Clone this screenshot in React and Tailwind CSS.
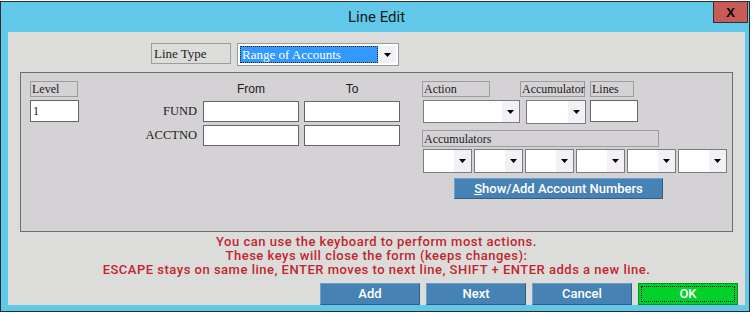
import React from "react";

const serif = { fontFamily: '"Liberation Serif", "Times New Roman", serif' };
const sans = { fontFamily: '"Liberation Sans", Arial, sans-serif' };

function Arrow() {
  return (
    <svg width="7" height="4" viewBox="0 0 7 4" className="block">
      <polygon points="0,0 7,0 3.5,4" fill="#000" />
    </svg>
  );
}

function Select({ w, h, arrowW = 17 }) {
  return (
    <div
      className="flex border border-[#7c7c7c] bg-white shrink-0"
      style={{ width: w, height: h }}
    >
      <div className="flex-1 bg-white" />
      <div
        className="flex items-center justify-center bg-[#f3f1f6]"
        style={{ width: arrowW }}
      >
        <Arrow />
      </div>
    </div>
  );
}

function Label({ children, className = "" }) {
  return (
    <div
      className={`flex items-center border border-[#9c9c9c] pl-[1px] text-[12px] leading-none text-[#1b1b1b] whitespace-nowrap overflow-visible shrink-0 ${className}`}
      style={serif}
    >
      {children}
    </div>
  );
}

function Input({ className = "", children }) {
  return (
    <div
      className={`flex items-center border border-[#666] bg-white pl-[2px] text-[12px] leading-none text-[#111] shrink-0 ${className}`}
      style={serif}
    >
      {children}
    </div>
  );
}

function BlueButton({ children, className = "" }) {
  return (
    <div
      className={`flex items-center justify-center bg-[#4682b4] border border-t-[#6f9fcb] border-l-[#6f9fcb] border-r-[#2d5e88] border-b-[#2d5e88] text-white text-[13px] shrink-0 ${className}`}
      style={{ fontFamily: 'Roboto, "Liberation Sans", sans-serif', fontWeight: 500 }}
    >
      {children}
    </div>
  );
}

export default function App() {
  return (
    <div className="w-[754px] h-[315px] bg-white overflow-hidden">
      <div className="mt-[1px] w-[750px] h-[311px] border border-[#2b2b2b] bg-[#62c8ea] flex flex-col">
        {/* title bar */}
        <div className="relative h-[30px] shrink-0 flex items-center justify-center">
          <span
            className="text-[15px] text-[#1a1a1a] pl-[3px] pt-[1px]"
            style={{ fontFamily: 'Roboto, "Noto Sans", sans-serif' }}
          >
            Line Edit
          </span>
          <div className="absolute right-[1px] top-[-1px] w-[35px] h-[22px] bg-[#c75b55] border border-[#3a2a2a] flex items-center justify-center">
            <span
              className="text-[13px] font-bold text-black leading-none"
              style={{ fontFamily: '"Liberation Sans", Arial, sans-serif' }}
            >
              X
            </span>
          </div>
        </div>

        {/* content */}
        <div className="ml-[7px] w-[737px] h-[273px] bg-[#dcdddb] flex flex-col">
          {/* line type row */}
          <div className="flex mt-[11px] ml-[143px] h-[23px]">
            <Label className="w-[80px] h-[21px] text-[13px] pl-[2px]">Line Type</Label>
            <div className="ml-[6px] w-[162px] h-[23px] border border-[#9a9a9a] bg-white flex p-[2px]">
              <div
                className="flex-1 bg-[#3399ff] border border-dotted border-[#222] text-white text-[13px] leading-none flex items-center pl-[1px]"
                style={serif}
              >
                Range of Accounts
              </div>
              <div className="w-[18px] bg-[#f3f1f6] flex items-center justify-center">
                <Arrow />
              </div>
            </div>
          </div>

          {/* panel */}
          <div className="ml-[12px] mt-[6px] w-[713px] h-[160px] border border-[#6e6e6e] bg-[#d4d2d5] flex">
            {/* level column */}
            <div className="ml-[9px] pt-[8px] flex flex-col">
              <Label className="w-[48px] h-[16px]">Level</Label>
              <Input className="mt-[3px] w-[49px] h-[22px]">1</Input>
            </div>

            {/* middle block */}
            <div className="ml-[21px] pt-[7px] flex flex-col">
              <div className="flex h-[16px] text-[12px] text-[#1a1a1a]" style={sans}>
                <div className="w-[103px]" />
                <div className="w-[96px] text-center">From</div>
                <div className="w-[5px]" />
                <div className="w-[96px] text-center">To</div>
              </div>
              <div className="mt-[5px] flex items-center h-[21px]">
                <div className="w-[97px] text-right text-[12.5px] text-[#1a1a1a]" style={serif}>FUND</div>
                <Input className="ml-[6px] w-[96px] h-[21px]" />
                <Input className="ml-[5px] w-[96px] h-[21px]" />
              </div>
              <div className="mt-[3px] flex items-center h-[21px]">
                <div className="w-[97px] text-right text-[12.5px] text-[#1a1a1a]" style={serif}>ACCTNO</div>
                <Input className="ml-[6px] w-[96px] h-[21px]" />
                <Input className="ml-[5px] w-[96px] h-[21px]" />
              </div>
            </div>

            {/* right block */}
            <div className="ml-[22px] pt-[8px] flex flex-col">
              <div className="flex h-[16px]">
                <Label className="w-[68px] h-[16px]">Action</Label>
                <Label className="ml-[30px] w-[65px] h-[16px]">Accumulator</Label>
                <Label className="ml-[5px] w-[44px] h-[16px]">Lines</Label>
              </div>
              <div className="mt-[3px] flex">
                <div className="ml-[1px]">
                  <Select w={97} h={23} />
                </div>
                <div className="ml-[6px]">
                  <Select w={60} h={24} />
                </div>
                <Input className="ml-[4px] w-[48px] h-[22px]" />
              </div>
              <Label className="mt-[6px] w-[237px] h-[17px]">Accumulators</Label>
              <div className="mt-[2px] ml-[1px] flex gap-[2px]">
                <Select w={49} h={24} />
                <Select w={49} h={24} />
                <Select w={49} h={24} />
                <Select w={49} h={24} />
                <Select w={49} h={24} />
                <Select w={49} h={24} />
              </div>
              <BlueButton className="mt-[5px] ml-[32px] w-[209px] h-[21px] text-[11.5px]">
                <span>
                  <span className="underline">S</span>how/Add Account Numbers
                </span>
              </BlueButton>
            </div>
          </div>

          {/* red text */}
          <div
            className="mt-[3px] flex flex-col items-center text-[13px] leading-[14px] tracking-[0.5px] text-[#c2262d]"
            style={{ fontFamily: 'Roboto, "Liberation Sans", sans-serif', fontWeight: 500 }}
          >
            <div>You can use the keyboard to perform most actions.</div>
            <div>These keys will close the form (keeps changes):</div>
            <div>ESCAPE stays on same line, ENTER moves to next line, SHIFT + ENTER adds a new line.</div>
          </div>

          {/* buttons */}
          <div className="mt-[6px] flex justify-end gap-[6px] pr-[7px]">
            <BlueButton className="w-[100px] h-[22px]">Add</BlueButton>
            <BlueButton className="w-[100px] h-[22px]">Next</BlueButton>
            <BlueButton className="w-[100px] h-[22px]">Cancel</BlueButton>
            <div className="w-[100px] h-[22px] bg-[#02d12b] border border-[#0b8f1d] p-[2px] shrink-0">
              <div
                className="w-full h-full border border-dotted border-black flex items-center justify-center text-white text-[13px]"
                style={{ fontFamily: 'Roboto, "Liberation Sans", sans-serif', fontWeight: 500 }}
              >
                OK
              </div>
            </div>
          </div>
        </div>
      </div>
    </div>
  );
}
